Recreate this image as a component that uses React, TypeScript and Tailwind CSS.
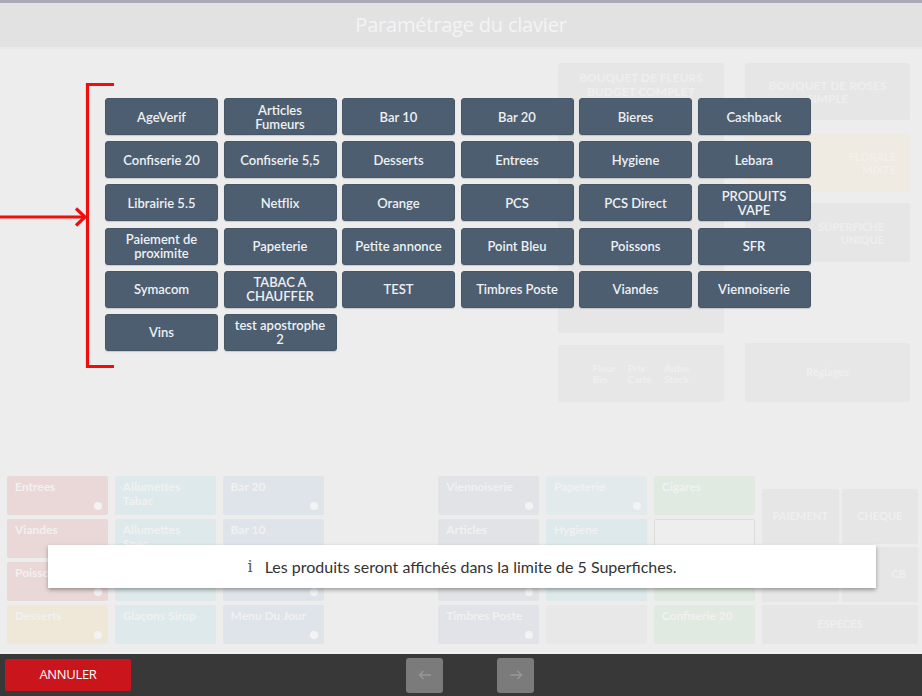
import React from 'react';

const keys: string[] = [
  'AgeVerif', 'Articles\nFumeurs', 'Bar 10', 'Bar 20', 'Bieres', 'Cashback',
  'Confiserie 20', 'Confiserie 5,5', 'Desserts', 'Entrees', 'Hygiene', 'Lebara',
  'Librairie 5.5', 'Netflix', 'Orange', 'PCS', 'PCS Direct', 'PRODUITS\nVAPE',
  'Paiement de\nproximite', 'Papeterie', 'Petite annonce', 'Point Bleu', 'Poissons', 'SFR',
  'Symacom', 'TABAC A\nCHAUFFER', 'TEST', 'Timbres Poste', 'Viandes', 'Viennoiserie',
  'Vins', 'test apostrophe\n2',
];

type Tile = { label: string; tone: string; dot?: boolean };

// faded keyboard behind the overlay, 4 rows x 7 cols
const bgTiles: Tile[] = [
  { label: 'Entrees', tone: 'bg-[#ead8d8]', dot: true },
  { label: 'Allumettes Tabac', tone: 'bg-[#dde9ea]' },
  { label: 'Bar 20', tone: 'bg-[#dfe4ea]', dot: true },
  { label: '', tone: 'bg-transparent' },
  { label: 'Viennoiserie', tone: 'bg-[#e2e3e6]', dot: true },
  { label: 'Papeterie', tone: 'bg-[#e2eaec]', dot: true },
  { label: 'Cigares', tone: 'bg-[#e0eae0]' },

  { label: 'Viandes', tone: 'bg-[#ead8d8]' },
  { label: 'Allumettes Spec', tone: 'bg-[#dde9ea]' },
  { label: 'Bar 10', tone: 'bg-[#dfe4ea]' },
  { label: '', tone: 'bg-transparent' },
  { label: 'Articles', tone: 'bg-[#e2e3e6]' },
  { label: 'Hygiene', tone: 'bg-[#dde9ea]' },
  { label: '', tone: 'bg-[#eeeeee] border border-[#dcdcdc]' },

  { label: 'Poissons', tone: 'bg-[#ead8d8]', dot: true },
  { label: '', tone: 'bg-[#dde9ea]' },
  { label: '', tone: 'bg-[#dfe4ea]', dot: true },
  { label: '', tone: 'bg-transparent' },
  { label: '', tone: 'bg-[#e2e3e6]', dot: true },
  { label: '', tone: 'bg-[#dde9ea]' },
  { label: '', tone: 'bg-[#e0eae0]' },

  { label: 'Desserts', tone: 'bg-[#efe7d8]', dot: true },
  { label: 'Glaçons Sirop', tone: 'bg-[#dde9ea]' },
  { label: 'Menu Du Jour', tone: 'bg-[#dfe3ea]', dot: true },
  { label: '', tone: 'bg-transparent' },
  { label: 'Timbres Poste', tone: 'bg-[#e1e3e9]', dot: true },
  { label: '', tone: 'bg-[#e8e8e8]' },
  { label: 'Confiserie 20', tone: 'bg-[#e0eae0]' },
];

export default function App() {
  return (
    <div className="relative w-[922px] h-[696px] overflow-hidden flex flex-col bg-[#ededed] font-['Lato','Open_Sans',sans-serif]">
      {/* header */}
      <div className="h-[3px] bg-[#aba8b8]" />
      <div className="h-[46px] bg-[#e2e2e2] border-b-2 border-[#e9e9e9] flex items-center justify-center">
        <span className="font-['Open_Sans',sans-serif] text-[20px] text-[#f4f4f4] tracking-[-0.2px]">Paramétrage du clavier</span>
      </div>

      {/* faded screen behind */}
      <div className="flex-1 flex flex-col">
        <div className="h-[419px] flex justify-end gap-[21px] pr-[12px] pt-[14px]">
          <div className="w-[166px] flex flex-col gap-[12px]">
            <div className="h-[270px] bg-[#e6e6e6] rounded-[2px] pt-[8px] px-[10px] text-center text-[12px] leading-[14px] font-bold text-[#eeeeee]">
              BOUQUET DE FLEURS BUDGET COMPLET
            </div>
            <div className="h-[57px] bg-[#e7e7e7] rounded-[2px] flex items-center justify-center gap-3 text-[10px] leading-[11px] text-[#efefef] font-bold">
              <span>Fleur<br />Bio</span>
              <span>Prix<br />Carte</span>
              <span>Autre<br />Stock</span>
            </div>
          </div>
          <div className="w-[165px] flex flex-col">
            <div className="h-[57px] bg-[#e6e6e6] rounded-[2px] flex items-center justify-center text-center px-3 text-[12px] leading-[13px] font-bold text-[#eeeeee]">
              BOUQUET DE ROSES SIMPLE
            </div>
            <div className="mt-[13px] h-[59px] bg-[#efeae2] rounded-[2px] flex items-center justify-end text-right pr-[14px] text-[11px] leading-[13px] font-bold text-[#f4f0e9]">
              FLORALE<br />MIXTE
            </div>
            <div className="mt-[11px] h-[59px] bg-[#e6e6e6] rounded-[2px] flex items-center justify-end text-right pr-[26px] text-[11px] leading-[13px] font-bold text-[#eeeeee]">
              SUPERFICHE<br />UNIQUE
            </div>
            <div className="mt-[81px] h-[59px] bg-[#e7e7e7] rounded-[2px] flex items-center justify-center text-[11px] text-[#efefef] font-bold">
              Réglages
            </div>
          </div>
        </div>

        <div className="mt-[8px] flex gap-[7px] pl-[7px]">
          <div className="w-[748px] grid grid-cols-7 grid-rows-4 gap-x-[6.5px] gap-y-[4px]">
            {bgTiles.map((t, i) => (
              <div key={i} className={`relative h-[39px] rounded-[2px] px-[8px] pt-[4px] text-[12px] leading-[14px] font-bold text-[#f1f1f1] ${t.tone}`}>
                {t.label}
                {t.dot && <span className="absolute right-[6px] bottom-[5px] w-[8px] h-[8px] rounded-full bg-[#f3f3f3]" />}
              </div>
            ))}
          </div>
          <div className="w-[156px] mt-[13px] grid grid-cols-2 gap-[3px] text-[11px] font-bold text-[#efefef]">
            <div className="h-[55px] bg-[#e6e6e6] rounded-[2px] flex items-center justify-center">PAIEMENT</div>
            <div className="h-[55px] bg-[#e6e6e6] rounded-[2px] flex items-center justify-center">CHEQUE</div>
            <div className="h-[55px] bg-[#e6e6e6] rounded-[2px]" />
            <div className="h-[55px] bg-[#e6e6e6] rounded-[2px] flex items-center justify-end pr-3">CB</div>
            <div className="col-span-2 h-[39px] bg-[#e6e6e6] rounded-[2px] flex items-center justify-center">ESPECES</div>
          </div>
        </div>
      </div>

      {/* footer */}
      <div className="h-[44px] bg-[#383838] border-t-2 border-[#f1f1f1] flex items-center px-[5px]">
        <button className="w-[126px] h-[32px] bg-[#c9151b] rounded-[2px] text-white text-[13px] font-['Open_Sans',sans-serif] tracking-[-0.3px]">
          ANNULER
        </button>
        <button className="ml-[275px] w-[37px] h-[35px] rounded-[3px] bg-[#7b7b7b] text-[#989898] flex items-center justify-center">
          <svg width="14" height="10" viewBox="0 0 14 10" fill="none" stroke="currentColor" strokeWidth="1.3">
            <path d="M13 5H1.5M5.5 1L1.5 5l4 4" />
          </svg>
        </button>
        <button className="ml-[54px] w-[37px] h-[35px] rounded-[3px] bg-[#7b7b7b] text-[#989898] flex items-center justify-center">
          <svg width="14" height="10" viewBox="0 0 14 10" fill="none" stroke="currentColor" strokeWidth="1.3">
            <path d="M1 5h11.5M8.5 1l4 4-4 4" />
          </svg>
        </button>
      </div>

      {/* keyboard chooser over the dimmed screen */}
      <div className="absolute left-[105px] top-[98px] grid grid-cols-[repeat(6,113px)] gap-x-[5.5px] gap-y-[6.2px]">
        {keys.map(k => (
          <div key={k} className="h-[37px] rounded-[3px] bg-[#4d5e70] border border-[#475767] shadow-[0_1px_1px_rgba(0,0,0,0.15)] flex items-center justify-center text-center whitespace-pre-line text-[13px] leading-[14px] font-semibold text-[#eef1f4]">
            {k}
          </div>
        ))}
      </div>

      {/* red annotation bracket + arrow */}
      <svg className="absolute left-0 top-[80px]" width="120" height="292" viewBox="0 0 120 292" fill="none" stroke="#f20d0d" strokeWidth="3.2">
        <path d="M114 4.5H87.5V286.5H114" />
        <path d="M0 137H84" />
        <path d="M76 128.5L85 137L76 145.5" />
      </svg>

      {/* info toast */}
      <div className="absolute left-[48px] top-[545px] w-[828px] h-[43px] bg-white shadow-[0_2px_4px_rgba(0,0,0,0.35)] flex items-center justify-center gap-[12px]">
        <span className="font-['DejaVu_Serif',serif] text-[16px] text-[#555555]">i</span>
        <span className="text-[16px] text-[#333333]">Les produits seront affichés dans la limite de 5 Superfiches.</span>
      </div>
    </div>
  );
}
